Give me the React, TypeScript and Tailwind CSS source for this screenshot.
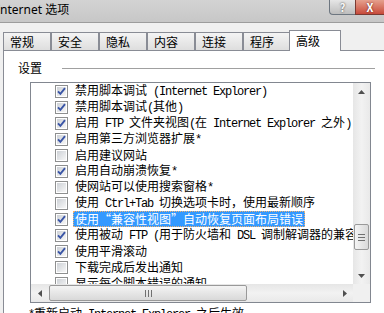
import React from "react";

const tabs = ["常规", "安全", "隐私", "内容", "连接", "程序"];

const rows = [
  { text: "禁用脚本调试 (Internet Explorer)", checked: true },
  { text: "禁用脚本调试(其他)", checked: true },
  { text: "启用 FTP 文件夹视图(在 Internet Explorer 之外)", checked: true },
  { text: "启用第三方浏览器扩展*", checked: true },
  { text: "启用建议网站", checked: false },
  { text: "启用自动崩溃恢复*", checked: true },
  { text: "使网站可以使用搜索窗格*", checked: false },
  { text: "使用 Ctrl+Tab 切换选项卡时，使用最新顺序", checked: false },
  { text: "使用“兼容性视图”自动恢复页面布局错误", checked: true, selected: true },
  { text: "使用被动 FTP (用于防火墙和 DSL 调制解调器的兼容性)", checked: true },
  { text: "使用平滑滚动", checked: true },
  { text: "下载完成后发出通知", checked: false },
  { text: "显示每个脚本错误的通知", checked: false },
];

// SimSun 风格：西文半角等宽，中文全角
function Mixed({ text }: { text: string }) {
  const parts = text.split(/([\x20-\x7e]+)/).filter(Boolean);
  return (
    <>
      {parts.map((p, i) =>
        /^[\x20-\x7e]+$/.test(p) ? (
          <span
            key={i}
            className="font-['Liberation_Mono',monospace] text-[12px] tracking-[-1.2px]"
          >
            {p}
          </span>
        ) : (
          <span key={i}>{p}</span>
        )
      )}
    </>
  );
}

function Check({ on }: { on: boolean }) {
  return (
    <span className="relative flex h-[13px] w-[13px] shrink-0 items-center justify-center border border-[#8e8f8f] bg-white">
      <span className="h-[9px] w-[9px] bg-gradient-to-br from-[#cdd1d6] to-[#f7f7f7]" />
      {on ? (
        <svg
          width="13"
          height="13"
          viewBox="0 0 13 13"
          className="absolute -left-px -top-px"
        >
          <path
            d="M3 6.3 L5.4 8.9 L10 3.2"
            fill="none"
            stroke="#3a55a6"
            strokeWidth="1.9"
          />
        </svg>
      ) : null}
    </span>
  );
}

function Arrow({ dir }: { dir: "up" | "down" | "left" | "right" }) {
  const points = {
    up: "0,4 3.5,0 7,4",
    down: "0,0 3.5,4 7,0",
    left: "4,0 0,3.5 4,7",
    right: "0,0 4,3.5 0,7",
  }[dir];
  const vertical = dir === "up" || dir === "down";
  return (
    <svg
      width={vertical ? 7 : 4}
      height={vertical ? 4 : 7}
      viewBox={vertical ? "0 0 7 4" : "0 0 4 7"}
    >
      <polygon points={points} fill="#505050" />
    </svg>
  );
}

export default function App() {
  return (
    <div
      lang="zh-CN"
      className="flex h-[313px] w-[384px] flex-col overflow-hidden bg-[#f0f0f0] font-['Noto_Sans_CJK_SC',sans-serif] text-[12px] text-black"
    >
      {/* 标题栏 */}
      <div className="flex h-[23px] shrink-0 items-start border-b border-[#9c9c9c] bg-gradient-to-b from-[#d3d3d3] to-[#c7c7c7]">
        <span className="-ml-[4px] mt-[2px] font-['Noto_Sans','Noto_Sans_CJK_SC',sans-serif] leading-[16px]">
          Internet 选项
        </span>
        <div className="ml-auto flex">
          <div className="flex h-[15px] w-[26px] items-center justify-center rounded-bl-[4px] border-b border-l border-[#6d7680] bg-gradient-to-b from-[#e6e6e6] to-[#bdbdbd] text-[11px] font-bold leading-none text-[#f8f8f8] [text-shadow:0_0_2px_#333]">
            ?
          </div>
          <div className="flex h-[15px] w-[29px] items-center justify-center border-b border-l border-[#7a3a32] bg-gradient-to-b from-[#e5a08e] to-[#c7493a] text-[11px] font-bold leading-none text-white [text-shadow:0_0_2px_#5a1a12]">
            X
          </div>
        </div>
      </div>

      {/* 选项卡 */}
      <div className="mt-[7px] flex h-[20px] shrink-0 items-end pl-[3px]">
        {tabs.map((t) => (
          <div
            key={t}
            className="flex h-[18px] w-[48px] items-center border-x border-t border-[#898c95] bg-gradient-to-b from-[#f4f4f4] to-[#dedede] pl-[6px] leading-[16px]"
          >
            {t}
          </div>
        ))}
        <div className="relative z-10 -mb-px -ml-[2px] flex h-[21px] w-[52px] items-start border-x border-t border-[#898c95] bg-white pl-[6px] pt-[2px] leading-[16px]">
          高级
        </div>
      </div>

      {/* 面板 */}
      <div className="ml-[3px] flex flex-1 flex-col border-l border-t border-[#898c95] bg-white">
        <div className="mt-[9px] flex h-[16px] items-center pl-[14px]">
          <span className="leading-[16px]">设置</span>
          <span className="ml-[20px] h-px w-[313px] bg-[#a0a0a0]" />
        </div>

        <div className="ml-[26px] mt-[6px] flex h-[221px] w-[341px] flex-col border border-[#828790]">
          <div className="flex h-[201px]">
            <div className="flex w-[322px] flex-col overflow-hidden whitespace-pre">
              {rows.map((r) => (
                <div key={r.text} className="flex h-[16px] shrink-0 items-center pl-[24px]">
                  <Check on={r.checked} />
                  <span
                    className={
                      r.selected
                        ? "ml-[5px] border border-dotted border-[#f0b070] bg-[#3399ff] px-px leading-[14px] text-white"
                        : "ml-[7px] leading-[16px]"
                    }
                  >
                    <Mixed text={r.text} />
                  </span>
                </div>
              ))}
            </div>
            {/* 竖向滚动条 */}
            <div className="flex w-[17px] flex-col bg-gradient-to-r from-[#e6e6e6] via-[#f2f2f2] to-[#e9e9e9]">
              <div className="flex h-[17px] items-center justify-center">
                <Arrow dir="up" />
              </div>
              <div className="h-[124px]" />
              <div className="mx-px flex h-[26px] flex-col items-center justify-center gap-[2px] rounded-[2px] border border-[#999] bg-gradient-to-r from-[#f4f4f4] to-[#d9d9d9]">
                <span className="h-px w-[7px] bg-[#707070]" />
                <span className="h-px w-[7px] bg-[#707070]" />
                <span className="h-px w-[7px] bg-[#707070]" />
              </div>
              <div className="flex-1" />
              <div className="flex h-[17px] items-center justify-center">
                <Arrow dir="down" />
              </div>
            </div>
          </div>
          {/* 横向滚动条 */}
          <div className="flex h-[18px]">
            <div className="flex w-[322px] bg-gradient-to-b from-[#e6e6e6] via-[#f2f2f2] to-[#e9e9e9]">
              <div className="flex w-[17px] items-center justify-center">
                <Arrow dir="left" />
              </div>
              <div className="my-px ml-px flex w-[198px] items-center justify-center gap-[2px] rounded-[2px] border border-[#999] bg-gradient-to-b from-[#f4f4f4] to-[#d9d9d9]">
                <span className="h-[7px] w-px bg-[#707070]" />
                <span className="h-[7px] w-px bg-[#707070]" />
                <span className="h-[7px] w-px bg-[#707070]" />
              </div>
              <div className="flex-1" />
              <div className="flex w-[17px] items-center justify-center">
                <Arrow dir="right" />
              </div>
            </div>
            <div className="w-[17px] bg-[#f0f0f0]" />
          </div>
        </div>

        <div className="ml-[24px] mt-[2px] whitespace-pre leading-[16px]">
          <Mixed text="*重新启动 Internet Explorer 之后生效" />
        </div>
      </div>
    </div>
  );
}
